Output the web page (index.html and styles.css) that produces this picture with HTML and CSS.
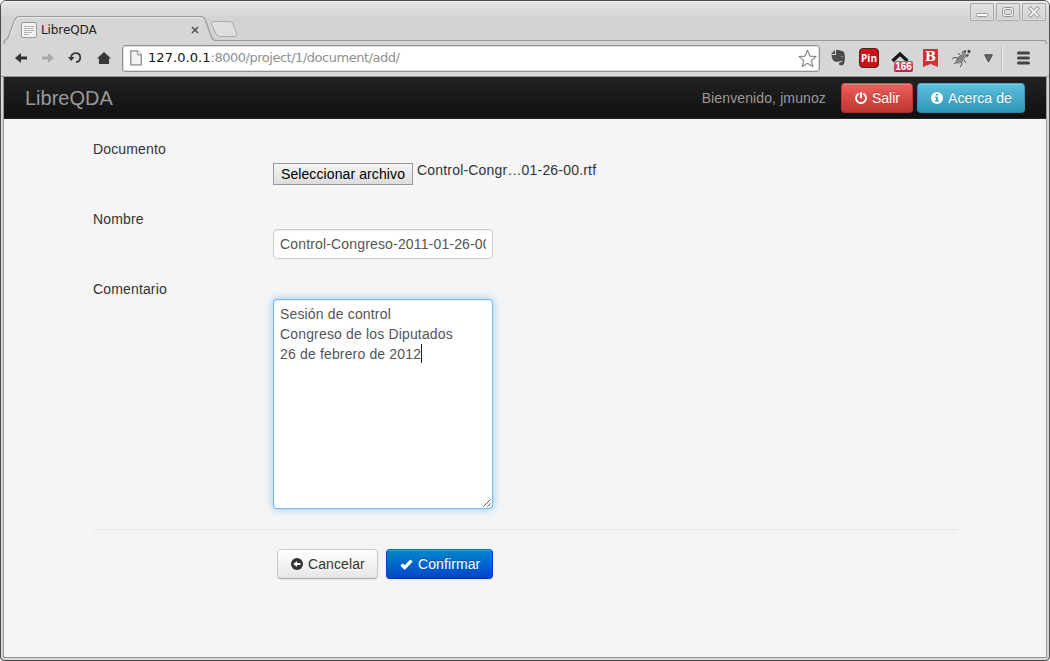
FILE: index.html
```html
<!DOCTYPE html>
<html lang="es">
<head>
<meta charset="utf-8">
<title>LibreQDA</title>
<link rel="stylesheet" href="styles.css">
</head>
<body>
<div class="window">
  <header class="tabstrip">
    <svg class="tab-outline" width="1048" height="43" viewBox="1 1 1048 43">
      <path d="M4 44V42Q4 40.5 6 39.5Q8 38.500 9 35.500L14.500 20.500Q16 16.500 20 16.500H200Q204 16.500 205.500 20.500L211.500 37Q213 40.500 216 40.500H1044Q1046.500 40.500 1046.500 44" fill="#d6d6d6" stroke="#999" stroke-width="1.200"/>
      <path d="M10 36L15.500 21Q17 17.500 20 17.500H200Q203 17.500 204.500 21" fill="none" stroke="#e9e9e9"/>
      <path d="M214 21.500H229Q232 21.500 233 24L236.500 33.500Q237.500 36.500 234 36.500H220Q217 36.500 216 34L211.500 24Q210.500 21.500 214 21.500Z" fill="#dedede" stroke="#aaa"/>
    </svg>
    <div class="tab">
      <svg width="16" height="16" viewBox="0 0 16 16"><rect x=".5" y=".5" width="15" height="15" rx="1.500" fill="#f4f4f4" stroke="#999"/><path d="M3 4.500h10M3 6.500h9M3 8.500h10M3 10.500h8M3 12.500h5" stroke="#aaa" stroke-dasharray="3 .5"/></svg>
      <span class="tab-title">LibreQDA</span>
      <svg class="tab-close" width="8" height="8" viewBox="0 0 8 8"><path d="M1 1l6 6M7 1l-6 6" stroke="#555" stroke-width="1.700"/></svg>
    </div>
    <div class="controls">
      <span class="control"><svg width="22" height="16" viewBox="0 0 22 16"><rect x="5.500" y="9.500" width="11" height="3" rx="1" fill="#fff" stroke="#999"/></svg></span>
      <span class="control"><svg width="22" height="16" viewBox="0 0 22 16"><rect x="5.500" y="3.500" width="11" height="9" rx="2" fill="#eee" stroke="#999"/><rect x="7.500" y="5.500" width="7" height="5" rx="1" fill="#ddd" stroke="#999"/></svg></span>
      <span class="control"><svg width="22" height="16" viewBox="0 0 22 16"><path d="M7.500 4.500l7 7M14.500 4.500l-7 7" stroke="#999" stroke-width="3.800" stroke-linecap="square"/><path d="M7.500 4.500l7 7M14.500 4.500l-7 7" stroke="#eee" stroke-width="2" stroke-linecap="square"/></svg></span>
    </div>
  </header>

  <div class="toolbar">
    <div class="nav-icons">
      <svg width="12" height="12" viewBox="0 0 12 12"><path d="M0 6l6-5v3.500h6v3H6V11z" fill="#333"/></svg>
      <svg width="12" height="12" viewBox="0 0 12 12"><path d="M12 6L6 1v3.500H0v3h6V11z" fill="#aaa"/></svg>
      <svg width="14" height="12" viewBox="0 0 14 12"><path d="M3 6.500C3 3 5 1.200 7.800 1.200S12.200 3.200 12.200 5.600 10.500 10 8 10.200" fill="none" stroke="#3a3a3a" stroke-width="1.800"/><path d="M0 5h6.500L3.200 9z" fill="#333"/></svg>
      <svg width="14" height="12" viewBox="0 0 14 12"><path d="M7 0l7 6.500h-2V12H2V6.500H0z" fill="#383838"/></svg>
    </div>
    <div class="address">
      <svg width="12" height="16" viewBox="0 0 12 16"><path d="M.8.800h6.500l4 4v10H.8z" fill="#f3f3f3" stroke="#8c8c8c" stroke-width="1.300"/><path d="M7.300.800v4h4" fill="#fff" stroke="#8c8c8c"/></svg>
      <span class="url"><span class="host">127.0.0.1</span>:8000/project/1/document/add/</span>
      <svg width="19" height="19" viewBox="0 0 19 19"><path d="M9.500 1.200l2.400 5.900 6.100.5-4.700 4 1.500 6-5.300-3.300-5.300 3.300 1.500-6-4.700-4 6.100-.5z" fill="#fff" stroke="#888" stroke-width="1.200" stroke-linejoin="round"/></svg>
    </div>
    <div class="extensions">
      <svg class="ext-elephant" width="14" height="16" viewBox="0 0 14 16"><path d="M0 4L4 0v4zM5 0h3c1 1 4 .5 5 2 1 3 1.300 8 0 12-1 1.800-5 1.800-5 0 0-2 1.500-2.500 3-1.800V11c-3-.5-3 1-5 .8C4 12 1 11 .500 5H5z" fill="#4c4c4c"/><path d="M9.500 6.500l2 .6v-1z" fill="#ddd"/></svg>
      <span class="ext-pin">Pin</span>
      <span class="ext-count"><svg width="18" height="10" viewBox="0 0 18 10"><path d="M1.500 9L9 2l7.500 7" fill="none" stroke="#181818" stroke-width="3.300"/></svg><span class="count">166</span></span>
      <span class="ext-b">B</span>
      <svg class="ext-bug" width="21" height="20" viewBox="0 0 21 20"><g stroke="#555" stroke-width="1" fill="none"><path d="M9 8L6 5M7 10L2 9.500 0 11M7 13l-4 1.500M10 13l-.5 4-1.500 2M12 12l2 3M12 6L10 3M5 14l-3 2"/></g><ellipse cx="8.500" cy="11" rx="6" ry="3" transform="rotate(-42 8.500 11)" fill="#777"/><path d="M4 14l7-6M6 15l7-6" stroke="#aaa" stroke-width=".8"/><circle cx="13" cy="6" r="3.600" fill="#8c8c8c"/><circle cx="16" cy="4" r="3" fill="#c4c4c4"/><circle cx="17" cy="3.500" r="1.300" fill="#222"/><circle cx="13" cy="3.500" r="1.100" fill="#333"/><circle cx="15.500" cy="7.500" r="1" fill="#333"/></svg>
      <svg class="ext-down" width="9" height="9" viewBox="0 0 9 9"><path d="M.7.800h7.600L4.500 8z" fill="#666" stroke="#444"/></svg>
      <span class="divider"></span>
      <svg class="ext-menu" width="13" height="14" viewBox="0 0 13 14"><path d="M1.500 2h10M1.500 7h10M1.500 12h10" stroke="#444" stroke-width="3" stroke-linecap="round"/></svg>
    </div>
  </div>

  <div class="page">
    <nav class="navbar">
      <a class="brand">LibreQDA</a>
      <span class="welcome">Bienvenido, jmunoz</span>
      <a class="btn btn-danger"><svg width="12" height="12" viewBox="0 0 12 12"><path d="M3.200 2A5 5 0 1 0 8.800 2" fill="none" stroke="#fff" stroke-width="1.900" stroke-linecap="round"/><path d="M6 .9v4.600" stroke="#fff" stroke-width="1.900" stroke-linecap="round"/></svg>Salir</a>
      <a class="btn btn-info"><svg width="12" height="12" viewBox="0 0 12 12"><circle cx="6" cy="6" r="6" fill="#fff"/><path d="M5 2h2v1.500H5zM4 4.700h3v3.500h1v1.400H4V8.200h1V6H4z" fill="#3ba5c5"/></svg>Acerca de</a>
    </nav>
    <form class="form">
      <label class="label">Documento</label>
      <div class="file-row"><button type="button" class="file-button">Seleccionar archivo</button><span class="file-name">Control-Congr…01-26-00.rtf</span></div>
      <label class="label">Nombre</label>
      <div class="field name-field"><span>Control-Congreso-2011-01-26-00</span></div>
      <label class="label">Comentario</label>
      <div class="field comment-field">Sesión de control<br>Congreso de los Diputados<br>26 de febrero de 2012<span class="caret"></span>
        <svg class="grip" width="8" height="8" viewBox="0 0 8 8"><path d="M.5 7.500l7-7M4.500 7.500l3-3" stroke="#555" stroke-width="1"/></svg>
      </div>
      <div class="actions">
        <a class="btn btn-cancel"><svg width="12" height="12" viewBox="0 0 12 12"><circle cx="6" cy="6" r="6" fill="#333"/><path d="M2.300 6L6 3v2h3.500v2H6v2z" fill="#fff"/></svg>Cancelar</a>
        <a class="btn btn-primary"><svg width="13" height="12" viewBox="0 0 13 12"><path d="M1.500 6.500l3.200 3.200L11.500 2.500" fill="none" stroke="#fff" stroke-width="3.200"/></svg>Confirmar</a>
      </div>
    </form>
  </div>
</div>
</body>
</html>
```
FILE: styles.css
```css
* { box-sizing: border-box; }
body { margin: 0; background: #fff; font: 14px/20px "Liberation Sans", Arial, sans-serif; color: #333; overflow: hidden; }
svg { display: block; flex: none; }
.window { width: 1050px; height: 661px; display: flex; flex-direction: column; border: 1px solid #4c4c4c; border-radius: 6px 6px 4px 4px; background: #d6d6d6; overflow: hidden; }

.tabstrip { position: relative; flex: none; height: 40px; display: flex; justify-content: space-between; background: linear-gradient(#f2f2f2 0, #e4e4e4 2px, #d2d2d2 18px, #d4d4d4); }
.tab-outline { position: absolute; left: 0; top: 0; }
.tab { position: relative; display: flex; align-items: center; width: 200px; height: 28px; margin: 15px 0 0 20px; font: 12px/16px "DejaVu Sans", sans-serif; letter-spacing: -.1px; color: #222; }
.tab-title { margin-left: 4px; flex: 1; }
.tab-close { margin-right: 22px; }
.controls { position: relative; display: flex; gap: 2px; padding: 2px 3px 0 0; }
.control { width: 24px; height: 18px; border: 1px solid #aaa; border-radius: 1px; box-shadow: inset 0 0 0 1px #dedede; }

.toolbar { position: relative; flex: none; display: flex; align-items: center; height: 36px; padding: 0 3px; border-bottom: 1px solid #969696; }
.nav-icons { display: flex; align-items: center; gap: 14.5px; width: 118px; padding: 0 0 2px 11px; }
.address { display: flex; align-items: center; width: 698px; height: 27px; margin-top: -1px; padding: 0 2px 0 7px; border: 1px solid #929292; border-radius: 3px; background: #fff; box-shadow: inset 0 0 0 1px #ddd; }
.url { flex: 1; margin-left: 6px; font: 13px/18px "DejaVu Sans", sans-serif; letter-spacing: -.48px; color: #8f8f8f; }
.host { letter-spacing: .05px; color: #111; }
.extensions { display: flex; align-items: center; padding-bottom: 1px; }
.ext-elephant { margin-left: 11px; }
.ext-pin { width: 20px; height: 20px; margin-left: 14px; border: 1px solid #542020; border-radius: 4px; background: #cb1218; color: #fff; font: bold 10px/18px "Open Sans", sans-serif; text-align: center; }
.ext-count { position: relative; width: 18px; height: 18px; margin-left: 12px; padding-top: 3px; }
.count { position: absolute; left: 3px; top: 12px; width: 19px; height: 11px; border-radius: 2px; background: linear-gradient(#dc5268, #b72340); color: #fff; font: bold 10px/11px "Liberation Sans", sans-serif; text-align: center; }
.ext-b { width: 15px; height: 18px; margin-left: 14px; background: #d03237; clip-path: polygon(0 0, 100% 0, 100% 100%, 50% 84%, 0 100%); color: #fff; font: bold 13px/15px "DejaVu Serif", serif; text-align: center; }
.ext-bug { margin-left: 14px; }
.ext-down { margin-left: 11px; }
.divider { width: 2px; height: 25px; margin-left: 8px; border-left: 1px solid #bbb; border-right: 1px solid #eee; }
.ext-menu { margin-left: 14px; }

.page { flex: 1; margin: 0 3px 3px; background: #f5f5f5; box-shadow: 0 0 0 1px #969696; clip-path: inset(0 -1px -1px); }
.navbar { display: flex; align-items: center; height: 42px; padding: 0 21px; border-bottom: 1px solid #252525; background: linear-gradient(#222, #111); color: #999; }
.brand { flex: 1; font-size: 20px; }
.welcome { margin-right: 15px; letter-spacing: .12px; }
.btn { display: flex; align-items: center; gap: 5px; height: 30px; padding: 0 12px 0 13px; border: 1px solid #bbb; border-color: #ccc #c8c8c8 #aaa; border-radius: 4px; background: linear-gradient(#fff, #e6e6e6); box-shadow: inset 0 1px rgba(255,255,255,.2), 0 1px 2px rgba(0,0,0,.05); color: #333; text-shadow: 0 1px 1px rgba(255,255,255,.75); white-space: nowrap; }
.btn-cancel { width: 101px; letter-spacing: .1px; }
.btn-danger, .btn-info, .btn-primary { color: #fff; text-shadow: 0 -1px 0 rgba(0,0,0,.25); }
.btn-danger { width: 72px; margin-right: 4px; border-color: #d2504b #bd362f #a62f2a; background: linear-gradient(#ee5f5b, #bd362f); }
.btn-info { width: 108px; border-color: #49adca #2f96b4 #2a86a1; background: linear-gradient(#5bc0de, #2f96b4); letter-spacing: .1px; }
.btn-primary { width: 107px; border-color: #0074bb #04c #003aa9; background: linear-gradient(#08c, #04c); letter-spacing: .1px; }

.form { width: 864px; margin: 20px 0 0 89px; display: flex; flex-direction: column; }
.label { height: 20px; letter-spacing: .15px; }
.file-row { display: flex; height: 50px; margin-left: 180px; padding-top: 1px; }
.file-button { width: 140px; height: 22px; margin: 3px 4px 0 0; padding: 0; border: 1px solid #999; border-radius: 0; background: linear-gradient(#f5f5f5, #ddd); color: #000; font: 14px/20px "Liberation Sans", sans-serif; letter-spacing: .1px; }
.file-name { letter-spacing: .19px; }
.field { width: 220px; margin-left: 180px; padding: 4px 6px; border: 1px solid #ccc; border-radius: 4px; background: #fff; color: #555; box-shadow: inset 0 1px 1px rgba(0,0,0,.075); }
.name-field { height: 30px; margin-bottom: 20px; white-space: nowrap; letter-spacing: .16px; }
.name-field span { display: block; width: 206px; overflow: hidden; }
.comment-field { position: relative; height: 210px; border-color: rgba(82,168,236,.8); box-shadow: inset 0 1px 1px rgba(0,0,0,.075), 0 0 8px rgba(82,168,236,.6); letter-spacing: .16px; }
.caret { display: inline-block; width: 1px; height: 19px; background: #222; vertical-align: top; }
.grip { position: absolute; right: 1px; bottom: 1px; }
.actions { display: flex; gap: 8px; height: 71px; margin-top: 20px; padding: 19px 0 0 184px; border-top: 1px solid #e5e5e5; background: #f4f4f4; }
```
